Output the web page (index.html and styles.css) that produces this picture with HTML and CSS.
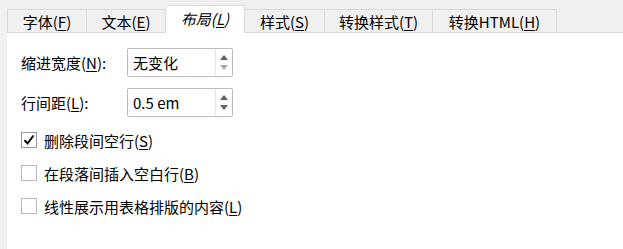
FILE: index.html
```html
<!DOCTYPE html>
<html lang="zh">
<head>
<meta charset="utf-8">
<link rel="stylesheet" href="styles.css">
</head>
<body>
<div class="window">
  <div class="tabs">
    <div class="tab t1">字体(<u>F</u>)</div>
    <div class="tab t2">文本(<u>E</u>)</div>
    <div class="tab t3 active">布局(<u>L</u>)</div>
    <div class="tab t4">样式(<u>S</u>)</div>
    <div class="tab t5">转换样式(<u>T</u>)</div>
    <div class="tab t6">转换HTML(<u>H</u>)</div>
  </div>
  <div class="panel">
    <div class="field">
      <span class="label">缩进宽度(<u>N</u>):</span>
      <div class="spin">
        <span class="value">无变化</span>
        <div class="arrows">
          <span class="up"></span>
          <span class="down disabled"></span>
        </div>
      </div>
    </div>
    <div class="field">
      <span class="label">行间距(<u>L</u>):</span>
      <div class="spin">
        <span class="value">0.5 em</span>
        <div class="arrows">
          <span class="up"></span>
          <span class="down"></span>
        </div>
      </div>
    </div>
    <div class="checks">
      <label class="check">
        <span class="box checked"><svg width="14" height="14" viewBox="0 0 14 14"><polyline points="2.5,7.2 5.5,10.5 11.5,2.5" fill="none" stroke="#000" stroke-width="2"/></svg></span>
        <span>删除段间空行(<u>S</u>)</span>
      </label>
      <label class="check">
        <span class="box"></span>
        <span>在段落间插入空白行(<u>B</u>)</span>
      </label>
      <label class="check">
        <span class="box"></span>
        <span>线性展示用表格排版的内容(<u>L</u>)</span>
      </label>
    </div>
  </div>
</div>
</body>
</html>
```

FILE: styles.css
```css
html, body {
  margin: 0;
  padding: 0;
  height: 100%;
}
body {
  background: #f0f0f0;
  font-family: "Noto Sans CJK SC", "Noto Sans", sans-serif;
  font-size: 15px;
  color: #000;
  overflow: hidden;
}
.window {
  display: flex;
  flex-direction: column;
  height: 100%;
  padding: 5px 0 0 7px;
  box-sizing: border-box;
}
.tabs {
  display: flex;
  align-items: flex-end;
  height: 27px;
  position: relative;
  z-index: 1;
}
.tab {
  height: 23px;
  box-sizing: border-box;
  border: 1px solid #d9d9d9;
  border-bottom: none;
  background: #f0f0f0;
  display: flex;
  align-items: center;
  justify-content: center;
  line-height: 1;
  margin-right: -1px;
}
.t1 { width: 80px; }
.t2 { width: 80px; }
.t3 { width: 80px; }
.t4 { width: 81px; }
.t5 { width: 109px; }
.t6 { width: 125px; }
.tab.active {
  height: 28px;
  margin-bottom: -1px;
  background: #fff;
  font-style: italic;
  border-radius: 2px 2px 0 0;
  padding-bottom: 3px;
}
.panel {
  flex: 1;
  background: #fff;
  border-top: 1px solid #d9d9d9;
  padding: 15px 0 0 14px;
  display: flex;
  flex-direction: column;
}
.field {
  display: flex;
  align-items: center;
  height: 29px;
  margin-bottom: 11px;
}
.label {
  width: 106px;
  line-height: 1;
}
.spin {
  width: 106px;
  height: 29px;
  box-sizing: border-box;
  border: 1px solid #bcbcbc;
  border-radius: 2px;
  display: flex;
  align-items: stretch;
}
.value {
  flex: 1;
  display: flex;
  align-items: center;
  padding-left: 5px;
  line-height: 1;
}
.arrows {
  width: 16px;
  border-left: 1px solid #e3e3e3;
  display: flex;
  flex-direction: column;
  align-items: center;
  justify-content: center;
  gap: 5px;
}
.up, .down {
  width: 0;
  height: 0;
  border-left: 4px solid transparent;
  border-right: 4px solid transparent;
}
.up { border-bottom: 5px solid #606060; }
.down { border-top: 5px solid #606060; }
.down.disabled { border-top-color: #a8a8a8; }
.checks {
  display: flex;
  flex-direction: column;
  gap: 17px;
  margin-top: 4px;
}
.check {
  display: flex;
  align-items: center;
  gap: 7px;
  height: 16px;
  line-height: 1;
}
.box {
  width: 16px;
  height: 16px;
  box-sizing: border-box;
  border: 1px solid #b8b8b8;
  background: #fff;
  display: flex;
  align-items: center;
  justify-content: center;
}
.box.checked { border-color: #9a9a9a; }
u { text-underline-offset: 2px; }
```
